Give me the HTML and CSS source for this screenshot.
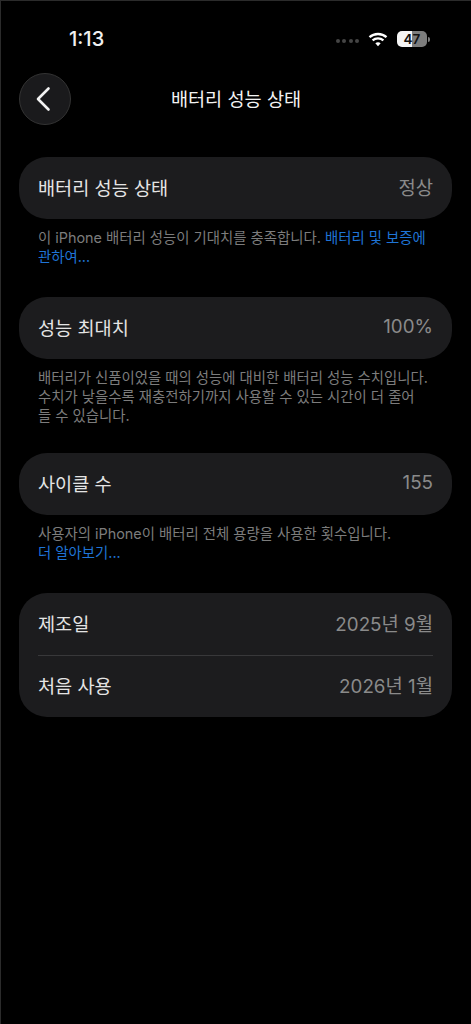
FILE: index.html
```html
<!DOCTYPE html>
<html lang="ko">
<head>
  <meta charset="UTF-8">
  <title>배터리 성능 상태</title>
  <link rel="stylesheet" href="styles.css">
</head>
<body>
  <div class="screen">
    <div class="status-bar">
      <span class="status-bar__time">1:13</span>
      <div class="status-bar__icons">
        <div class="signal-dots"><i></i><i></i><i></i><i></i></div>
        <svg class="wifi" width="20" height="15" viewBox="0 0 20 15">
          <path d="M1.5 5.2C6.2 .9 13.8 .9 18.5 5.2" fill="none" stroke="#fff" stroke-width="2.3"/>
          <path d="M4.6 8.3C7.6 5.7 12.4 5.7 15.4 8.3" fill="none" stroke="#fff" stroke-width="2.3"/>
          <path d="M7.3 11.2C9 10 11 10 12.7 11.2L10 14.2Z" fill="#fff"/>
        </svg>
        <div class="battery">
          <div class="battery__body"><span>47</span></div>
          <div class="battery__cap"></div>
        </div>
      </div>
    </div>

    <div class="nav">
      <button class="nav__back">
        <svg width="16" height="26" viewBox="0 0 16 26">
          <path d="M13.5 2.5L3 13L13.5 23.5" fill="none" stroke="#f2f2f2" stroke-width="2.6" stroke-linecap="round" stroke-linejoin="round"/>
        </svg>
      </button>
      <h1 class="nav__title">배터리 성능 상태</h1>
    </div>

    <section class="group">
      <div class="card">
        <div class="row"><span class="row__label">배터리 성능 상태</span><span class="row__value">정상</span></div>
      </div>
      <p class="note">이 iPhone 배터리 성능이 기대치를 충족합니다. <a class="note__link">배터리 및 보증에<br>관하여...</a></p>
    </section>

    <section class="group group--tight">
      <div class="card">
        <div class="row"><span class="row__label">성능 최대치</span><span class="row__value">100%</span></div>
      </div>
      <p class="note">배터리가 신품이었을 때의 성능에 대비한 배터리 성능 수치입니다.<br>수치가 낮을수록 재충전하기까지 사용할 수 있는 시간이 더 줄어<br>들 수 있습니다.</p>
    </section>

    <section class="group">
      <div class="card">
        <div class="row"><span class="row__label">사이클 수</span><span class="row__value">155</span></div>
      </div>
      <p class="note">사용자의 iPhone이 배터리 전체 용량을 사용한 횟수입니다.<br><a class="note__link">더 알아보기...</a></p>
    </section>

    <section class="group">
      <div class="card card--list">
        <div class="row"><span class="row__label">제조일</span><span class="row__value">2025년 9월</span></div>
        <div class="card__divider"></div>
        <div class="row"><span class="row__label">처음 사용</span><span class="row__value">2026년 1월</span></div>
      </div>
    </section>
  </div>
</body>
</html>
```

FILE: styles.css
```css
* {
  box-sizing: border-box;
}

html, body {
  margin: 0;
  background-color: #000;
}

body {
  font-family: "Inter", "Noto Sans CJK KR", sans-serif;
  color: #f2f2f2;
}

.screen {
  width: 471px;
  height: 1024px;
  overflow: hidden;
  border-top: 1px solid #2b2b2b;
  border-left: 1px solid #2b2b2b;
  padding: 0 18px;
}

.status-bar {
  display: flex;
  justify-content: space-between;
  align-items: center;
  height: 72px;
  padding: 4px 23px 0 50px;
}

.status-bar__time {
  font-size: 20px;
  font-weight: 500;
  color: #f0f0f0;
}

.status-bar__icons {
  display: flex;
  align-items: center;
}

.signal-dots {
  display: flex;
  gap: 2.5px;
  margin-right: 9px;
  margin-top: 3px;
}

.signal-dots i {
  width: 4px;
  height: 4px;
  border-radius: 50%;
  background-color: #454545;
}

.wifi {
  margin-right: 9px;
}

.battery {
  display: flex;
  align-items: center;
}

.battery__body {
  width: 30px;
  height: 16px;
  border-radius: 5px;
  background: linear-gradient(to right, #f5f5f5 50%, #7d7d7d 50%);
  display: flex;
  align-items: center;
  justify-content: center;
}

.battery__body span {
  font-size: 13.5px;
  font-weight: 600;
  color: #111;
}

.battery__cap {
  width: 2px;
  height: 5px;
  margin-left: 1px;
  border-radius: 0 2px 2px 0;
  background-color: #7d7d7d;
}

.nav {
  display: flex;
  align-items: center;
  height: 51px;
  margin-bottom: 33px;
}

.nav__back {
  width: 52px;
  height: 52px;
  padding: 0 4px 0 0;
  border-radius: 50%;
  border: 1px solid #333;
  background-color: #1a1a1c;
  display: flex;
  align-items: center;
  justify-content: center;
}

.nav__title {
  flex: 1;
  margin: 0 52px 0 0;
  padding-bottom: 2px;
  text-align: center;
  font-size: 18.6px;
  font-weight: 400;
  color: #f2f2f2;
}

.group {
  margin-bottom: 31px;
}

.group--tight {
  margin-bottom: 28px;
}

.card {
  width: 433px;
  height: 62px;
  border-radius: 28px;
  background-color: #1c1c1e;
  padding: 0 19px;
  display: flex;
  align-items: center;
}

.card--list {
  height: 124px;
  flex-direction: column;
  align-items: stretch;
}

.card--list .row {
  flex: 1;
}

.card__divider {
  height: 1px;
  background-color: #38383a;
}

.row {
  display: flex;
  justify-content: space-between;
  align-items: center;
  width: 100%;
  padding-bottom: 3px;
  font-size: 18.6px;
}

.row__label {
  color: #e4e4e4;
}

.row__value {
  color: #8a8a8a;
  font-size: 18.8px;
}

.note {
  margin: 9px 19px 0;
  font-size: 14.4px;
  line-height: 19px;
  color: #7c7c7c;
  white-space: nowrap;
}

.note__link {
  color: #1f74d6;
}
```
